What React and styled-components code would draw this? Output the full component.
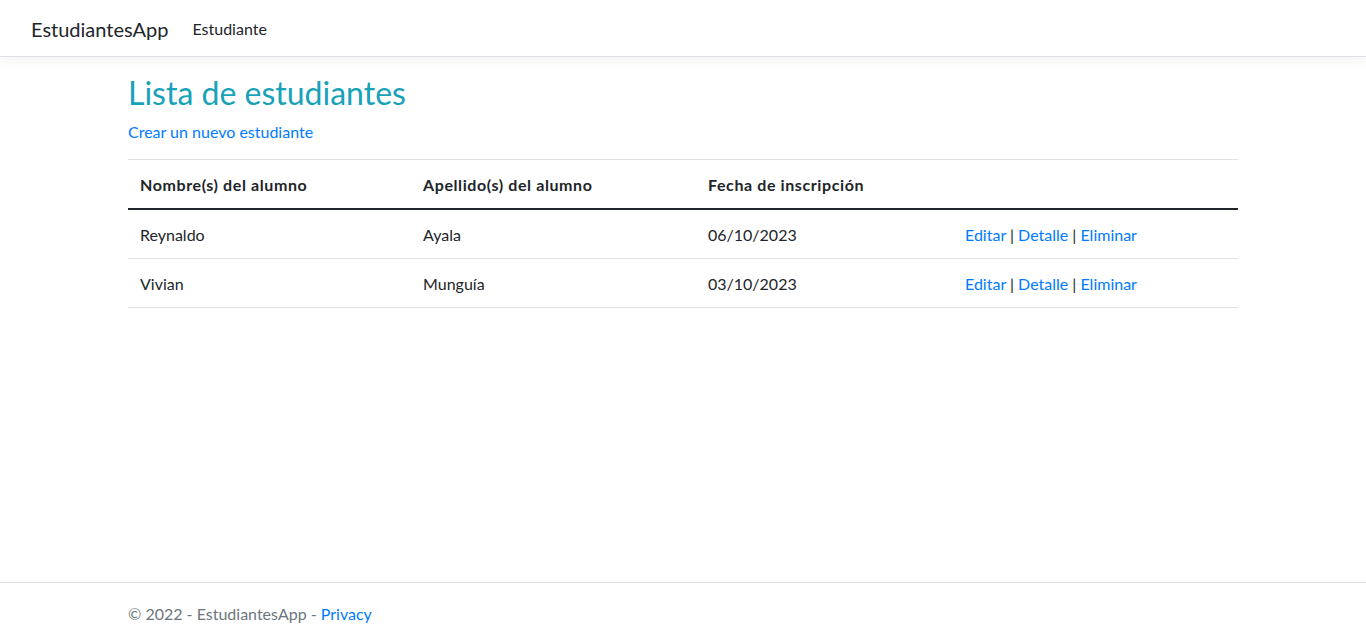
import React from 'react';
import styled, { createGlobalStyle } from 'styled-components';

const GlobalStyle = createGlobalStyle`
  html, body, #root {
    margin: 0;
    height: 100%;
  }
  body {
    font-family: Lato, "Open Sans", "Liberation Sans", sans-serif;
    font-size: 16px;
    line-height: 1.5;
    color: #212529;
    background: #fff;
  }
  * {
    box-sizing: border-box;
  }
`;

const Page = styled.div`
  min-height: 100%;
  display: flex;
  flex-direction: column;
`;

const Header = styled.header`
  border-bottom: 1px solid #dee2e6;
  box-shadow: 0 4px 12px rgba(0, 0, 0, 0.05);
  margin-bottom: 16px;
`;

const Navbar = styled.nav`
  display: flex;
  align-items: center;
  padding: 8px 31px;
`;

const Brand = styled.a`
  font-size: 20px;
  line-height: 30px;
  padding: 6px 0 4px;
  margin-right: 16px;
  color: #212529;
  text-decoration: none;
`;

const NavLink = styled.a`
  padding: 9px 8px 7px;
  color: #212529;
  text-decoration: none;
`;

const Container = styled.div`
  width: 100%;
  max-width: 1140px;
  margin: 0 auto;
  padding: 0 15px;
`;

const Main = styled.main`
  flex: 1;
`;

const Title = styled.h1`
  margin: 0 0 8px;
  padding-top: 1px;
  font-size: 32px;
  font-weight: 400;
  line-height: 37.4px;
  color: #17a2b8;
`;

const Paragraph = styled.p`
  margin: 0 0 16px;
  padding-top: 1px;
  line-height: 23px;
`;

const Link = styled.a`
  color: #007bff;
  text-decoration: none;
`;

const Table = styled.table`
  width: 100%;
  border-collapse: collapse;
  table-layout: fixed;
`;

const Th = styled.th`
  width: ${(p) => p.$w || 'auto'};
  text-align: left;
  font-weight: 700;
  letter-spacing: 0.6px;
  padding: 13px 12px 11px;
  border-top: 1px solid #dee2e6;
  border-bottom: 2px solid #212529;
`;

const Td = styled.td`
  padding: 13px 12px 11px;
  border-top: 1px solid #dee2e6;
  border-bottom: 1px solid #dee2e6;
`;

const Footer = styled.footer`
  border-top: 1px solid #dee2e6;
  padding-top: 1px;
  line-height: 59px;
  color: #6c757d;
  white-space: nowrap;
`;

const students = [
  { nombre: 'Reynaldo', apellido: 'Ayala', fecha: '06/10/2023' },
  { nombre: 'Vivian', apellido: 'Munguía', fecha: '03/10/2023' },
];

const App = () => {
  return (
    <Page>
      <GlobalStyle />
      <Header>
        <Navbar>
          <Brand href="#">EstudiantesApp</Brand>
          <NavLink href="#">Estudiante</NavLink>
        </Navbar>
      </Header>
      <Main>
        <Container>
          <Title>Lista de estudiantes</Title>
          <Paragraph>
            <Link href="#">Crear un nuevo estudiante</Link>
          </Paragraph>
          <Table>
            <thead>
              <tr>
                <Th $w="283px">Nombre(s) del alumno</Th>
                <Th $w="285px">Apellido(s) del alumno</Th>
                <Th $w="257px">Fecha de inscripción</Th>
                <Th />
              </tr>
            </thead>
            <tbody>
              {students.map((s) => (
                <tr key={s.nombre}>
                  <Td>{s.nombre}</Td>
                  <Td>{s.apellido}</Td>
                  <Td>{s.fecha}</Td>
                  <Td>
                    <Link href="#">Editar</Link> | <Link href="#">Detalle</Link> |{' '}
                    <Link href="#">Eliminar</Link>
                  </Td>
                </tr>
              ))}
            </tbody>
          </Table>
        </Container>
      </Main>
      <Footer>
        <Container>
          © 2022 - EstudiantesApp - <Link href="#">Privacy</Link>
        </Container>
      </Footer>
    </Page>
  );
};

export default App;
